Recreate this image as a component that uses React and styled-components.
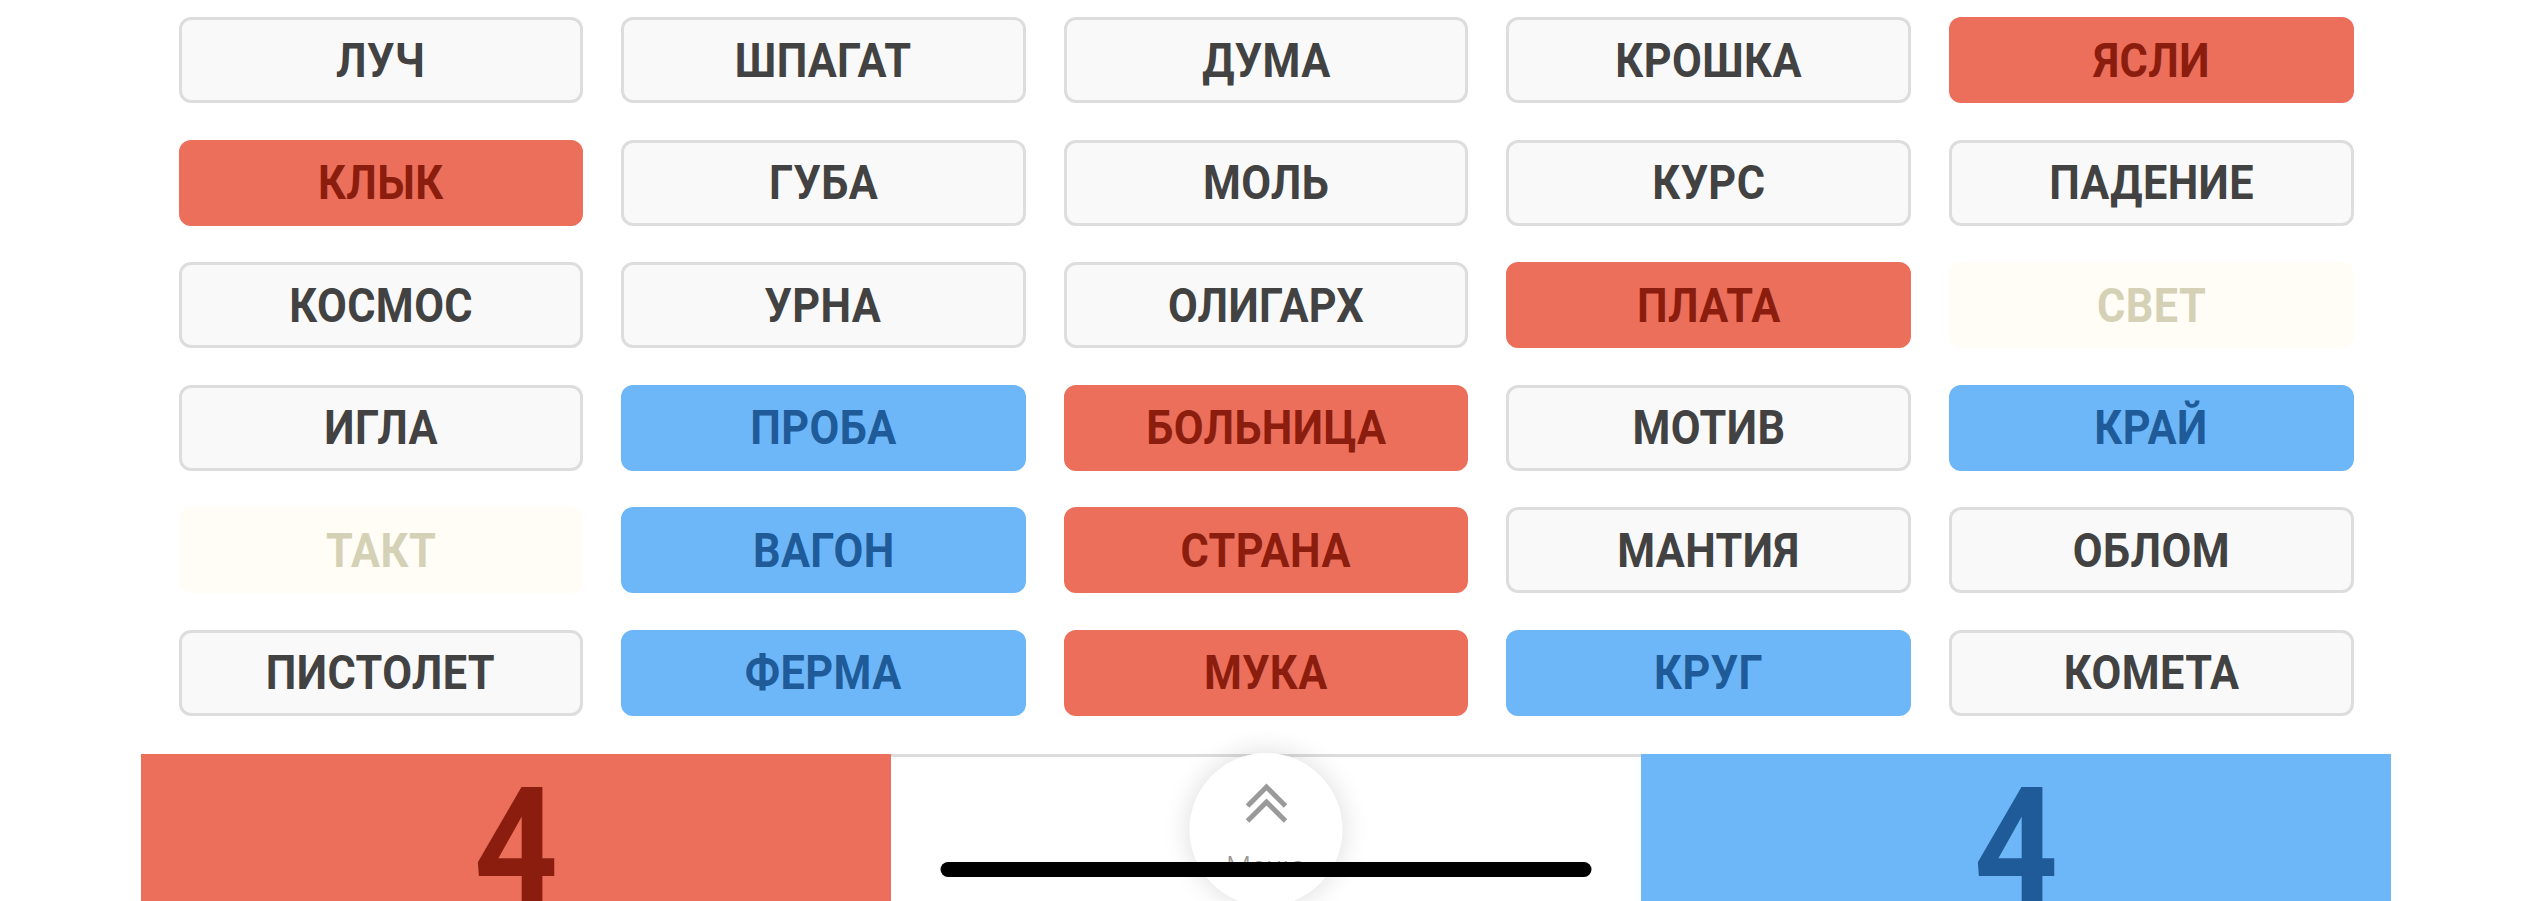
import React from 'react'
import styled, { createGlobalStyle } from 'styled-components'

const GlobalStyle = createGlobalStyle`
  body {
    margin: 0;
    background: #fff;
    font-family: Roboto, 'Noto Sans', sans-serif;
    overflow: hidden;
  }
`

const palette = {
  neutral: { bg: '#f9f9f9', text: '#424242', border: '#dddddd' },
  red: { bg: '#ec6f5b', text: '#8a1d0e', border: '#ec6f5b' },
  blue: { bg: '#6db7f8', text: '#1f5a99', border: '#6db7f8' },
  faded: { bg: '#fffdf5', text: '#d5d1b6', border: '#fffdf5' },
}

const Page = styled.div`
  width: 2250px;
  margin: 0 auto;
`

const Board = styled.div`
  display: grid;
  grid-template-columns: repeat(5, 1fr);
  column-gap: 38px;
  row-gap: 36.5px;
  padding: 17px 37.5px 0;
`

const Card = styled.div`
  height: 86px;
  box-sizing: border-box;
  border-radius: 12px;
  border: 3px solid ${(p) => palette[p.$kind].border};
  background: ${(p) => palette[p.$kind].bg};
  color: ${(p) => palette[p.$kind].text};
  display: flex;
  align-items: center;
  justify-content: center;
`

// the reference uses a condensed face; squeeze Roboto to match
const Word = styled.span`
  display: inline-block;
  font-family: Roboto, sans-serif;
  font-weight: 700;
  font-size: 48px;
  letter-spacing: 0.5px;
  transform: scaleX(0.9);
`

const ScoreBar = styled.div`
  position: relative;
  margin-top: 38.5px;
  display: grid;
  grid-template-columns: 1fr 1fr 1fr;
  height: 170px;
`

const Score = styled.div`
  background: ${(p) => palette[p.$team].bg};
  color: ${(p) => palette[p.$team].text};
  font-family: Roboto, sans-serif;
  font-weight: 700;
  font-size: 160px;
  line-height: 1;
  text-align: center;
  padding-top: 13px;
`

const Digit = styled.span`
  display: inline-block;
  transform: scaleX(0.92);
`

const Middle = styled.div`
  position: relative;
  background: #fff;
  border-top: 3px solid #dcdcdc;
`

const MenuButton = styled.div`
  position: absolute;
  top: -4px;
  left: 50%;
  transform: translateX(-50%);
  width: 153px;
  height: 153px;
  border-radius: 50%;
  background: #fff;
  box-shadow: 0 0 28px rgba(0, 0, 0, 0.14);
  display: flex;
  flex-direction: column;
  align-items: center;
  padding-top: 29px;
  box-sizing: border-box;
`

const MenuLabel = styled.span`
  margin-top: 27px;
  font-family: Roboto, sans-serif;
  font-weight: 300;
  font-size: 29px;
  line-height: 1;
  color: #9a9a9a;
`

const HomeIndicator = styled.div`
  position: absolute;
  top: 108px;
  left: 50%;
  transform: translateX(-50%);
  width: 651px;
  height: 15px;
  border-radius: 8px;
  background: #000;
`

const words = [
  ['ЛУЧ', 'neutral'], ['ШПАГАТ', 'neutral'], ['ДУМА', 'neutral'], ['КРОШКА', 'neutral'], ['ЯСЛИ', 'red'],
  ['КЛЫК', 'red'], ['ГУБА', 'neutral'], ['МОЛЬ', 'neutral'], ['КУРС', 'neutral'], ['ПАДЕНИЕ', 'neutral'],
  ['КОСМОС', 'neutral'], ['УРНА', 'neutral'], ['ОЛИГАРХ', 'neutral'], ['ПЛАТА', 'red'], ['СВЕТ', 'faded'],
  ['ИГЛА', 'neutral'], ['ПРОБА', 'blue'], ['БОЛЬНИЦА', 'red'], ['МОТИВ', 'neutral'], ['КРАЙ', 'blue'],
  ['ТАКТ', 'faded'], ['ВАГОН', 'blue'], ['СТРАНА', 'red'], ['МАНТИЯ', 'neutral'], ['ОБЛОМ', 'neutral'],
  ['ПИСТОЛЕТ', 'neutral'], ['ФЕРМА', 'blue'], ['МУКА', 'red'], ['КРУГ', 'blue'], ['КОМЕТА', 'neutral'],
]

const Chevrons = () => (
  <svg width='44' height='44' viewBox='0 0 44 44' fill='none'>
    <g stroke='#9a9a9a' strokeWidth='5' strokeLinejoin='miter'>
      <polyline points='3,24 22,5 41,24' />
      <polyline points='3,39 22,20 41,39' />
    </g>
  </svg>
)

const App = () => {
  return (
    <Page>
      <GlobalStyle />
      <Board>
        {words.map(([word, kind]) => (
          <Card key={word} $kind={kind}>
            <Word>{word}</Word>
          </Card>
        ))}
      </Board>
      <ScoreBar>
        <Score $team='red'>
          <Digit>4</Digit>
        </Score>
        <Middle>
          <MenuButton>
            <Chevrons />
            <MenuLabel>Меню</MenuLabel>
          </MenuButton>
        </Middle>
        <Score $team='blue'>
          <Digit>4</Digit>
        </Score>
        <HomeIndicator />
      </ScoreBar>
    </Page>
  )
}

export default App
